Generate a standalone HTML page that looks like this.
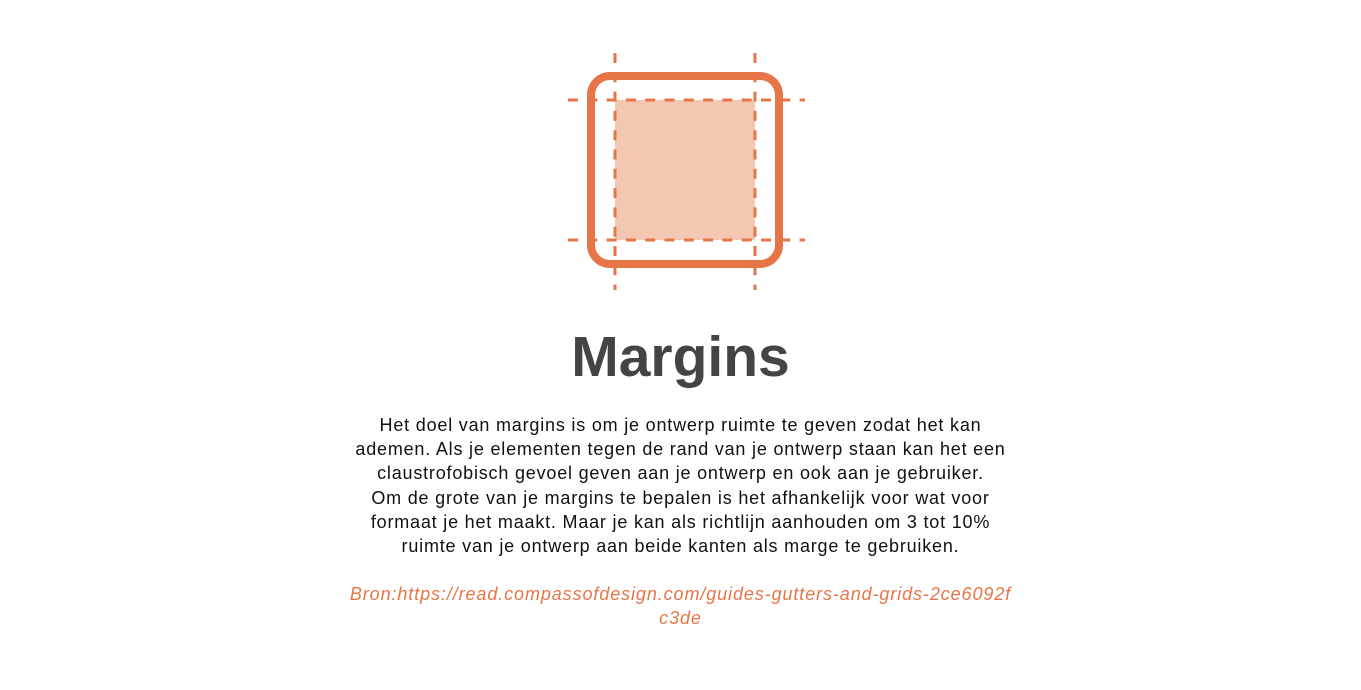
<!DOCTYPE html>
<html><head><meta charset="utf-8"><style>
html,body{margin:0;padding:0;background:#fff;width:1361px;height:690px;overflow:hidden;position:relative;font-family:"Liberation Sans",sans-serif}
.t{position:absolute;left:0;width:1361px;text-align:center;white-space:nowrap}
h1{position:absolute;left:0;width:1361px;top:320px;margin:0;text-align:center;font-size:57px;font-weight:bold;color:#444;line-height:74px}
.p{font-size:18px;color:#111;line-height:24.2px;letter-spacing:0.8px}
.l{font-size:18px;color:#e67547;font-style:italic;line-height:24px;letter-spacing:0.9px}
</style></head><body>
<svg style="position:absolute;left:0;top:0" width="1361" height="690">
<rect x="615" y="100" width="140" height="140" fill="#f4c7b3"/>
<rect x="591" y="76" width="188" height="188" rx="19" fill="none" stroke="#e67547" stroke-width="8"/>
<g stroke="#e67547" stroke-width="3" stroke-dasharray="10 9.3">
<line x1="615" y1="53" x2="615" y2="290"/>
<line x1="755" y1="53" x2="755" y2="290"/>
<line x1="568" y1="100" x2="805" y2="100"/>
<line x1="568" y1="240" x2="805" y2="240"/>
</g>
</svg>
<h1>Margins</h1>
<div class="t p" style="top:413px">Het doel van margins is om je ontwerp ruimte te geven zodat het kan<br>ademen. Als je elementen tegen de rand van je ontwerp staan kan het een<br>claustrofobisch gevoel geven aan je ontwerp en ook aan je gebruiker.<br>Om de grote van je margins te bepalen is het afhankelijk voor wat voor<br>formaat je het maakt. Maar je kan als richtlijn aanhouden om 3 tot 10%<br>ruimte van je ontwerp aan beide kanten als marge te gebruiken.</div>
<div class="t l" style="top:582px">Bron:https://read.compassofdesign.com/guides-gutters-and-grids-2ce6092f<br>c3de</div>
</body></html>
